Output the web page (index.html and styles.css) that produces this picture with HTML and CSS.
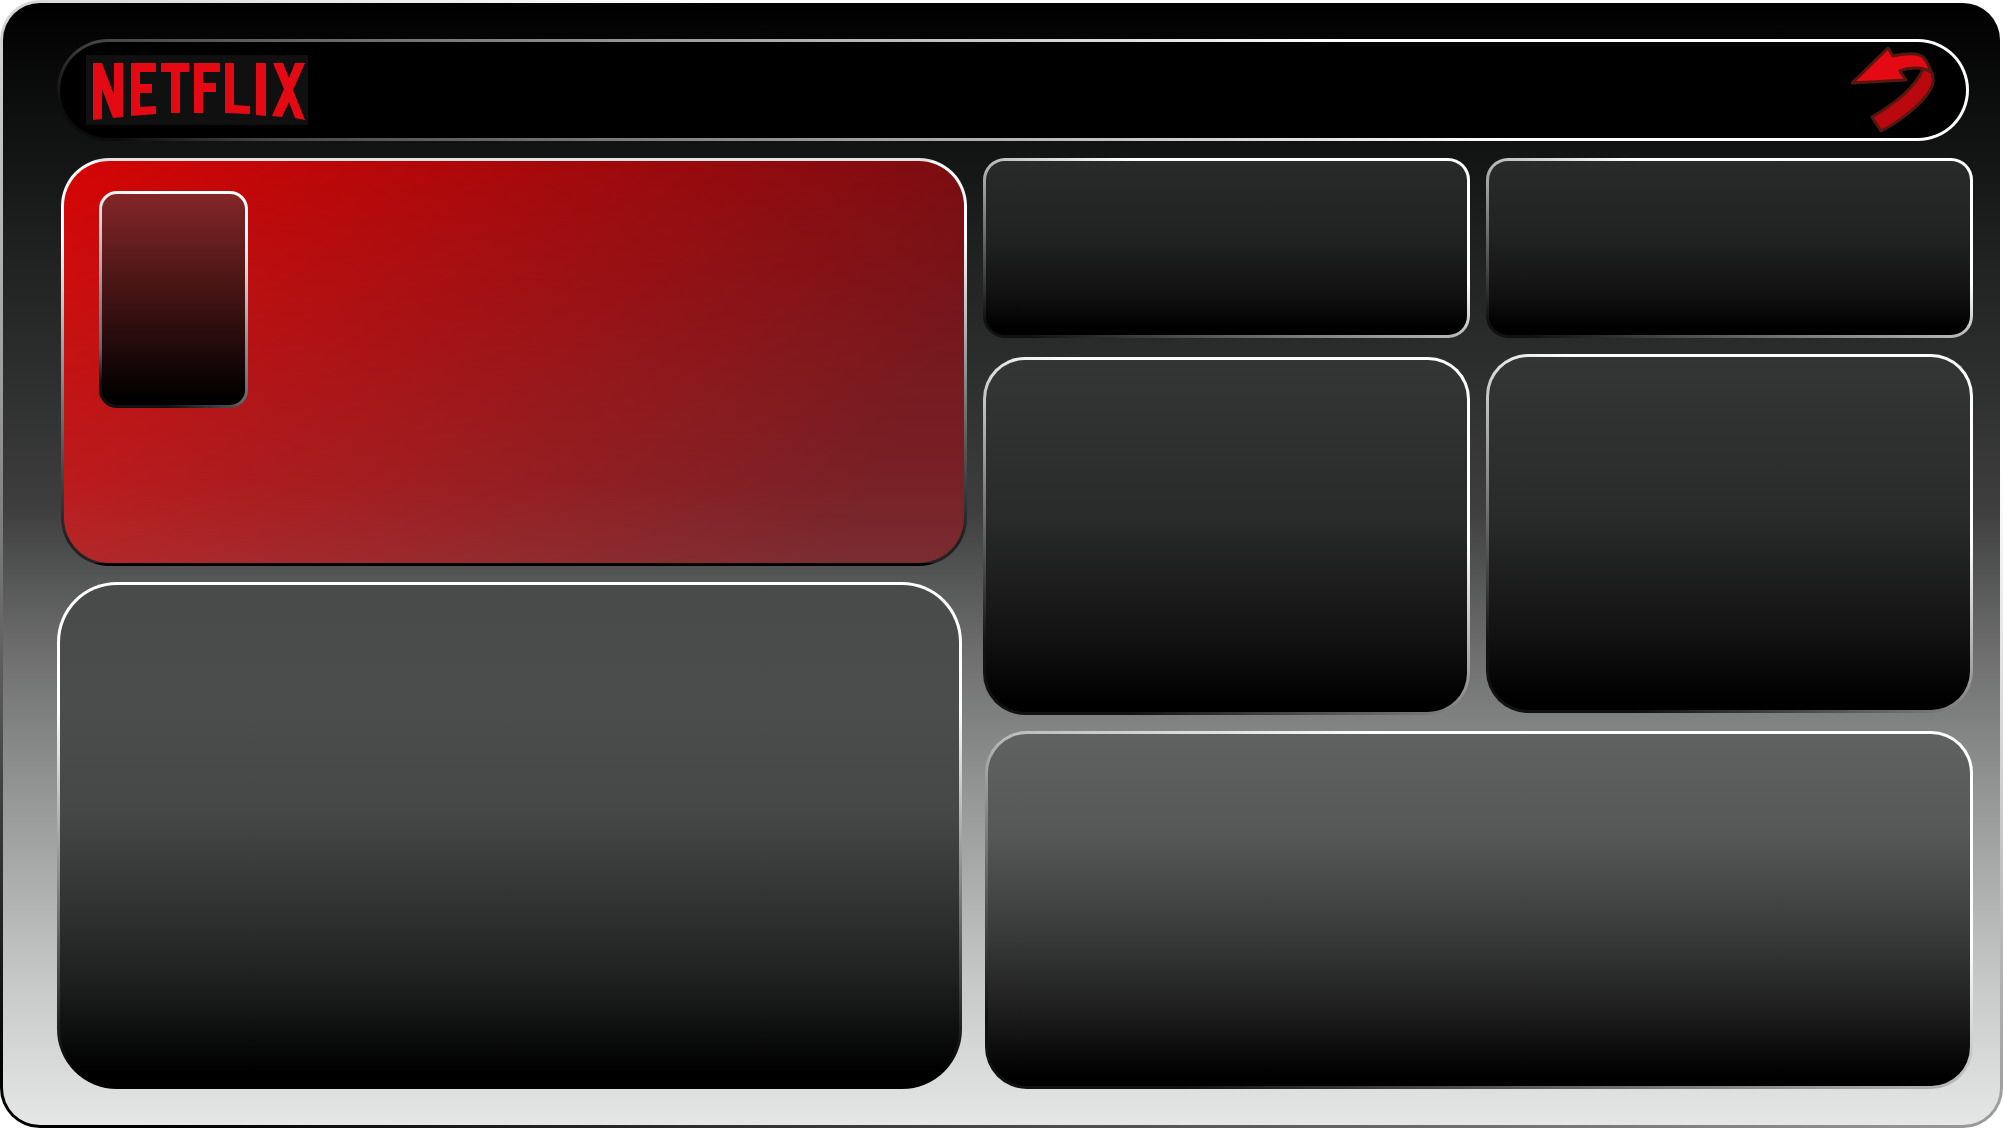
FILE: index.html
```html
<!DOCTYPE html>
<html lang="en">
<head>
<meta charset="utf-8">
<meta name="viewport" content="width=device-width, initial-scale=1">
<title>Netflix</title>
<link rel="stylesheet" href="styles.css">
</head>
<body>
<div class="frame">
  <header class="topbar">
    <a class="brand" href="#" aria-label="Netflix">
      <svg class="brand-logo" viewBox="0 0 222 70" aria-hidden="true">
        <rect width="222" height="70" fill="#101010"/>
        <g fill="#e50914">
          <path d="M7 8h9l12 32V8h9v54l-10 1L16 34v30l-9 1z"/>
          <path d="M45 8h25v9H54v12h12v9H54v14l16-1v8l-25 2z"/>
          <path d="M75 8h28v9h-9v41h-9V17H75z"/>
          <path d="M108 8h26v9h-17v11h13v9h-13v21h-9z"/>
          <path d="M139 8h9v42l16 1v8l-25-1z"/>
          <path d="M170 8h10v53l-10-1z"/>
          <path d="M187 8h10l6 15 6-15h10l-12 27 12 30-10-2-6-16-7 15-10-1 12-27z"/>
        </g>
      </svg>
    </a>
    <button class="back" type="button" aria-label="Back">
      <svg class="back-icon" viewBox="0 0 84 86" aria-hidden="true">
        <g stroke="#57170f" stroke-width="3" stroke-linejoin="round">
          <path fill="#b9090f" d="M21 70Q62 46 72 22L77 20Q83 27 82 35C80 50 52 73 30 84z"/>
          <path fill="#e50914" d="M1 36L37 1l5 8C56 6 68 5 73 11q4 5 7 14-7-4-15-4-9 0-16 3l6 9z"/>
        </g>
      </svg>
    </button>
  </header>
  <main class="board">
    <div class="column primary">
      <section class="panel featured"><div class="panel poster"></div></section>
      <section class="panel details"></section>
    </div>
    <div class="column secondary">
      <div class="pair">
        <div class="column stack stack-start">
          <section class="panel small"></section>
          <section class="panel medium"></section>
        </div>
        <div class="column stack stack-end">
          <section class="panel small"></section>
          <section class="panel medium"></section>
        </div>
      </div>
      <section class="panel wide"></section>
    </div>
  </main>
</div>
</body>
</html>
```
FILE: styles.css
```css
* { box-sizing: border-box; }

body {
  margin: 0;
  background: #fff;
  font-family: "Liberation Sans", Arial, sans-serif;
}

.frame,
.topbar,
.panel {
  border: 3px solid transparent;
  background: var(--fill) padding-box, var(--edge) border-box;
}

.frame {
  --fill: linear-gradient(#000, #1d201f 21%, #2e302f 34%, #3d3e3d 45%, #505251 50%, #6b6b6b 57%, #808281 64%, #c6c8c7 87%, #e5e7e6);
  --edge: linear-gradient(20deg, #000 3%, #999 39%, #d8d8d8 61%, #fff 75%);
  display: flex;
  flex-direction: column;
  gap: 17px;
  min-height: 100vh;
  padding: 36px 27px 36px 54px;
  border-radius: 40px;
}

.topbar {
  --fill: linear-gradient(#000, #000);
  --edge: linear-gradient(30deg, #0c0c0c 3%, #444 10%, #707070 24%, #a8a8a8 42%, #fff 70%);
  display: flex;
  justify-content: space-between;
  align-items: center;
  height: 102px;
  margin-right: 4px;
  padding: 0 31px 0 26px;
  border-radius: 51px;
}

.brand-logo { display: block; width: 222px; height: 70px; }

.back {
  padding: 0;
  border: 0;
  background: none;
  cursor: pointer;
}

.back-icon { display: block; width: 84px; height: 86px; }

.board {
  display: flex;
  flex: 1;
  gap: 16px;
}

.column {
  display: grid;
  gap: 16px;
}

.primary {
  flex: 910 1 0;
  grid-template-rows: 408fr 507fr;
}

.secondary {
  flex: 990 1 0;
  grid-template-rows: 557fr 358fr;
}

.pair {
  display: flex;
  gap: 16px;
}

.stack {
  flex: 1;
  grid-template-rows: 180fr 359fr;
}

.stack-start { row-gap: 19px; }
.stack-end { margin-bottom: 2px; }

.featured {
  --fill: linear-gradient(#8c8c9100, #8c8c9128 80%, #8c8c9140), linear-gradient(118deg, #d60404, #740d12 88%);
  --edge: linear-gradient(#fff 20%, #000 94%);
  margin-left: 4px;
  padding: 30px 35px;
  border-radius: 48px;
}

.poster {
  --fill: linear-gradient(#842627, #000 97%);
  --edge: linear-gradient(20deg, #111 10%, #666 22%, #888 40%, #fff 85%);
  width: 149px;
  height: 217px;
  border-radius: 18px;
}

.details {
  --fill: linear-gradient(#494b4a, #4b4d4c 25%, #464847 45%, #333534 62%, #1e2020 79%, #000 97%);
  --edge: linear-gradient(#fff 25%, #000 97%);
  margin-right: 5px;
  border-radius: 60px;
}

.small {
  --fill: linear-gradient(#292b2a, #202221 45%, #101110 77%, #000 96%);
  --edge: linear-gradient(to top right, #111 5%, #bbb 50%, #fff 65%);
  border-radius: 22px;
}

.medium {
  --fill: linear-gradient(#343635, #292b2a 45%, #101110 80%, #000 97%);
  --edge: linear-gradient(25deg, #111 12%, #fff 68%);
  border-radius: 42px;
}

.wide {
  --fill: linear-gradient(#606261, #565857 28%, #3c3e3d 54%, #1c1c1c 80%, #000 97%);
  --edge: linear-gradient(to top right, #111 10%, #b8b8b8 50%, #fff 70%);
  margin-left: 2px;
  border-radius: 42px;
}
```
